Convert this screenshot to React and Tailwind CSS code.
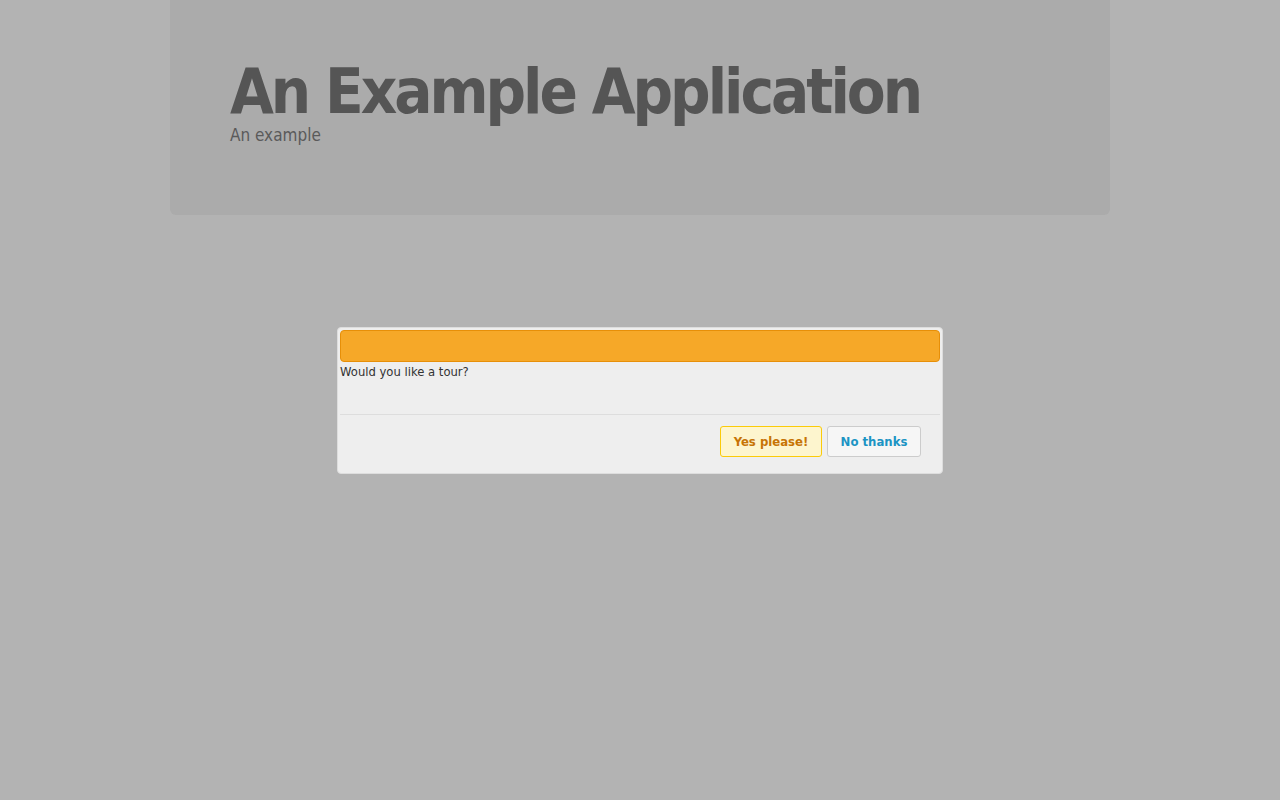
export default function App() {
  return (
    <div className="min-h-[800px] w-full bg-[#b3b3b3] font-['DejaVu_Sans',sans-serif]">
      {/* Jumbotron header */}
      <div className="mx-auto h-[215px] w-[940px] rounded-b-md bg-[#ababab] px-[60px] pt-[61px]">
        <h1 className="font-['DejaVu_Sans_Condensed','DejaVu_Sans',sans-serif] text-[63px] font-bold leading-[62px] tracking-[-3px] text-[#555555]">
          An Example Application
        </h1>
        <p className="mt-[3px] font-['DejaVu_Sans_Condensed','DejaVu_Sans',sans-serif] text-[17px] leading-[18px] text-[#5a5a5a]">
          An example
        </p>
      </div>

      {/* Tour dialog */}
      <div className="mx-auto mt-[112px] w-[606px] rounded-[4px] border border-[#dddddd] bg-[#eeeeee] p-[2px] text-[#333333]">
        <div className="h-[32px] rounded-[4px] border border-[#e78f08] bg-[#f6a828]" />
        <div className="h-[52px] pt-[2px] text-[11.6px] leading-[16px]">Would you like a tour?</div>
        <div className="flex justify-end gap-[5px] border-t border-[#dddddd] pb-[14px] pr-[19px] pt-[11px] font-['DejaVu_Sans_Condensed','DejaVu_Sans',sans-serif]">
          <button className="h-[31px] w-[102px] rounded-[3px] border border-[#fbcb09] bg-[#fdf5ce] text-[13px] font-bold text-[#c77405]">
            Yes please!
          </button>
          <button className="h-[31px] w-[94px] rounded-[3px] border border-[#cccccc] bg-[#f6f6f6] text-[13px] font-bold text-[#1c94c4]">
            No thanks
          </button>
        </div>
      </div>
    </div>
  )
}
